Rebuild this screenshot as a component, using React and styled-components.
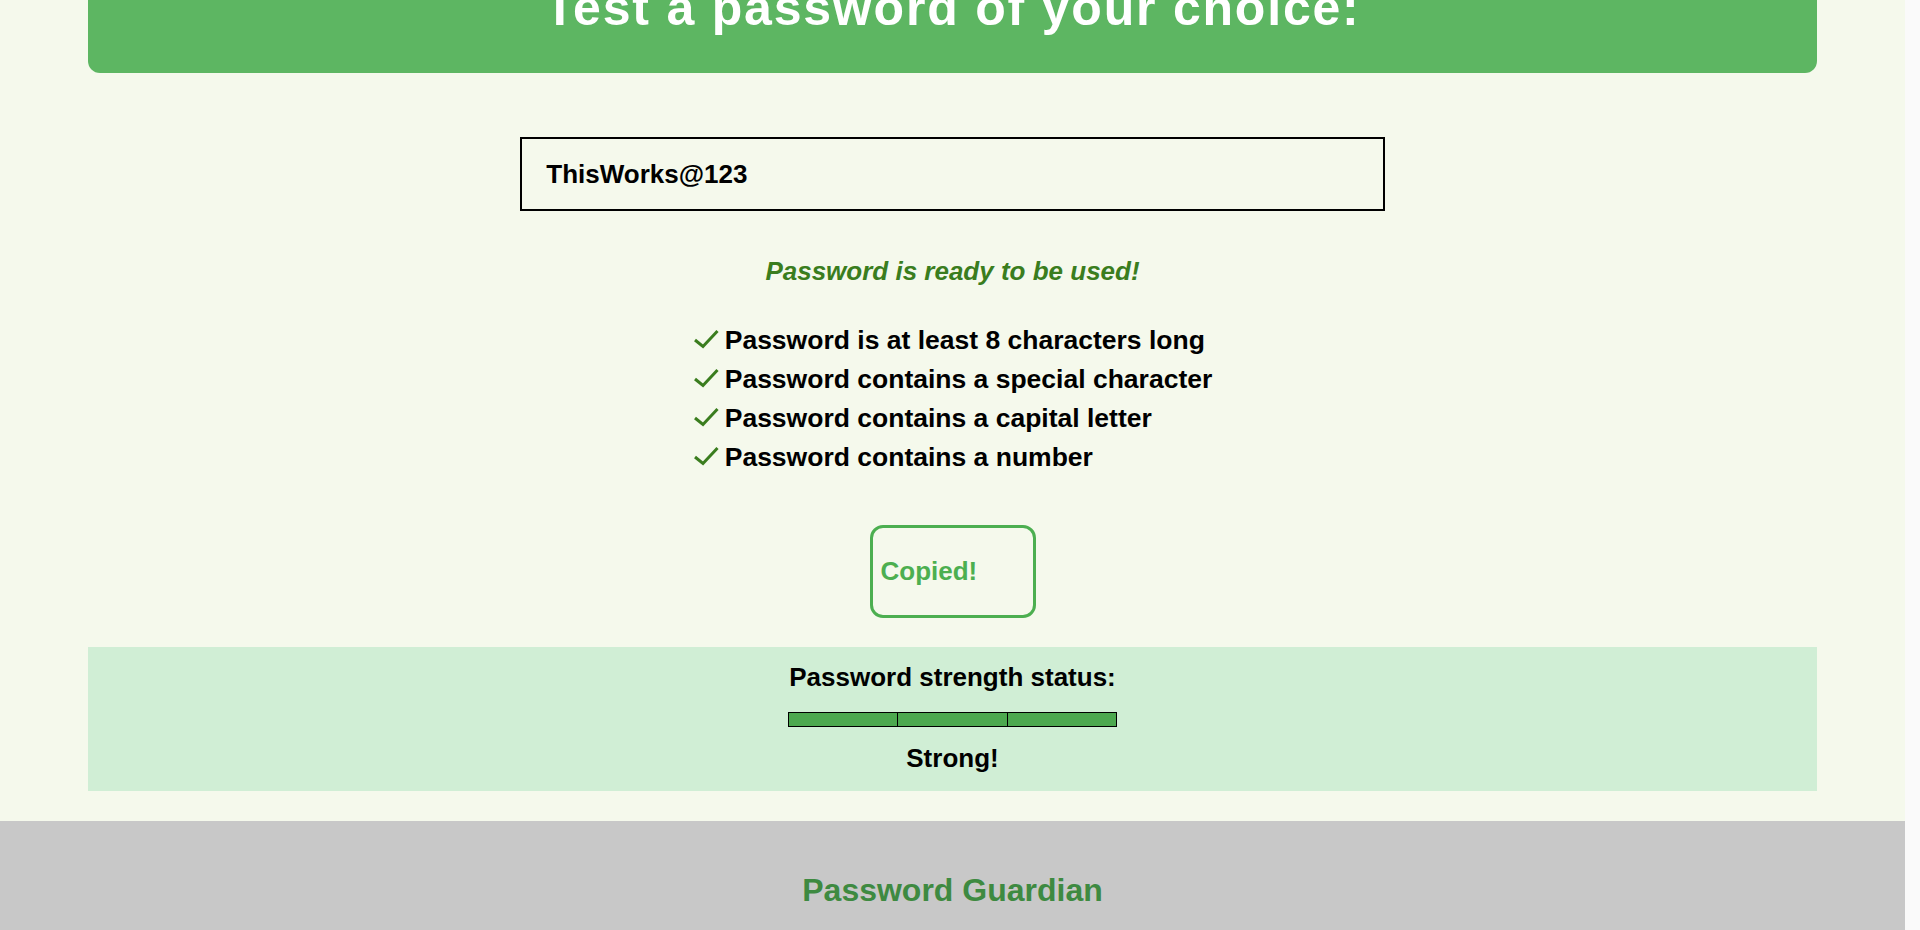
import React, { useLayoutEffect, useState } from 'react';
import styled, { createGlobalStyle } from 'styled-components';

// html shows as the scrollbar gutter on the right, body carries the page
const GlobalStyle = createGlobalStyle`
  html {
    margin: 0;
    padding: 0;
    background: #fafafa;
  }
  body {
    margin: 0 15px 0 0;
    padding: 0;
    background: #f5f9ec;
    font-family: "Liberation Sans", Arial, sans-serif;
  }
`;

const Main = styled.main`
  margin: 0 88px;
  padding: 189px 0 30px;
  display: flex;
  flex-direction: column;
  align-items: center;
`;

const Hero = styled.header`
  align-self: stretch;
  background: #5db662;
  border-radius: 12px;
  padding: 40px 20px 37px;
  text-align: center;
`;

const HeroTitle = styled.h1`
  margin: 0;
  font-size: 50px;
  line-height: 56px;
  font-weight: 700;
  letter-spacing: 1.8px;
  color: #fff;
`;

const PasswordInput = styled.input`
  width: 50%;
  height: 74px;
  box-sizing: border-box;
  margin-top: 64px;
  padding: 0 24px;
  border: 2px solid #000;
  background: transparent;
  font-family: inherit;
  font-size: 26px;
  font-weight: 700;
  color: #000;
  outline: none;
`;

const Status = styled.p`
  margin: 45px 0 0;
  font-size: 26px;
  line-height: 30px;
  font-style: italic;
  font-weight: 700;
  color: #3a7d1e;
`;

const RuleList = styled.ul`
  margin: 35px 0 0;
  padding: 0;
  list-style: none;
`;

const RuleItem = styled.li`
  display: flex;
  align-items: center;
  gap: 6px;
  font-size: 26.5px;
  line-height: 39px;
  font-weight: 700;
  color: #000;
`;

const CheckIcon = styled.svg`
  width: 26px;
  height: 20px;
  flex-shrink: 0;
  margin-top: -3px;
`;

const CopyButton = styled.button`
  margin-top: 48px;
  width: 166px;
  height: 93px;
  box-sizing: border-box;
  padding: 0 8px;
  border: 3px solid #4caf50;
  border-radius: 13px;
  background: transparent;
  font-family: inherit;
  font-size: 26px;
  font-weight: 700;
  color: #4caf50;
  text-align: left;
  cursor: pointer;
`;

const StrengthPanel = styled.section`
  align-self: stretch;
  margin-top: 29px;
  padding: 15px 0 18px;
  background: #d0eed5;
  display: flex;
  flex-direction: column;
  align-items: center;
`;

const StrengthText = styled.p`
  margin: ${p => (p.$gap ? `${p.$gap}px` : 0)} 0 0;
  font-size: 26px;
  line-height: 30px;
  font-weight: 700;
  color: #000;
`;

const Meter = styled.div`
  margin-top: 20px;
  width: 329px;
  height: 15px;
  box-sizing: border-box;
  border: 1px solid #000;
  background: #000;
  display: grid;
  grid-template-columns: repeat(3, 1fr);
  gap: 1px;
`;

const Segment = styled.span`
  background: ${p => (p.$on ? '#4ca84f' : '#d0eed5')};
`;

const Footer = styled.footer`
  height: 307px;
  box-sizing: border-box;
  padding-top: 51px;
  background: #c8c8c8;
  text-align: center;
`;

const FooterTitle = styled.h2`
  margin: 0;
  font-size: 32px;
  line-height: 37px;
  font-weight: 700;
  color: #3e8a41;
`;

const rules = [
  { label: 'Password is at least 8 characters long', test: v => v.length >= 8 },
  { label: 'Password contains a special character', test: v => /[^A-Za-z0-9]/.test(v) },
  { label: 'Password contains a capital letter', test: v => /[A-Z]/.test(v) },
  { label: 'Password contains a number', test: v => /[0-9]/.test(v) },
];

function Check() {
  return (
    <CheckIcon viewBox="0 0 26 20" fill="none">
      <polyline
        points="2,11 10,17.5 24.5,2"
        stroke="#3a7d1e"
        strokeWidth="3"
        strokeLinecap="butt"
        strokeLinejoin="miter"
      />
    </CheckIcon>
  );
}

export default function App() {
  const [password, setPassword] = useState('ThisWorks@123');
  const passed = rules.filter(r => r.test(password)).length;
  const level = passed === 4 ? 3 : passed >= 2 ? 2 : passed > 0 ? 1 : 0;
  const verdict = ['Too weak', 'Weak', 'Medium', 'Strong!'][level];

  useLayoutEffect(() => {
    window.scrollTo(0, 249);
  }, []);

  return (
    <>
      <GlobalStyle />
      <Main>
        <Hero>
          <HeroTitle>Test a password of your choice:</HeroTitle>
        </Hero>

        <PasswordInput
          type="text"
          value={password}
          onChange={e => setPassword(e.target.value)}
        />

        {passed === 4 && <Status>Password is ready to be used!</Status>}

        <RuleList>
          {rules.filter(r => r.test(password)).map(r => (
            <RuleItem key={r.label}>
              <Check />
              {r.label}
            </RuleItem>
          ))}
        </RuleList>

        <CopyButton>Copied!</CopyButton>

        <StrengthPanel>
          <StrengthText>Password strength status:</StrengthText>
          <Meter>
            {[1, 2, 3].map(i => (
              <Segment key={i} $on={i <= level} />
            ))}
          </Meter>
          <StrengthText $gap={16}>{verdict}</StrengthText>
        </StrengthPanel>
      </Main>
      <Footer>
        <FooterTitle>Password Guardian</FooterTitle>
      </Footer>
    </>
  );
}
